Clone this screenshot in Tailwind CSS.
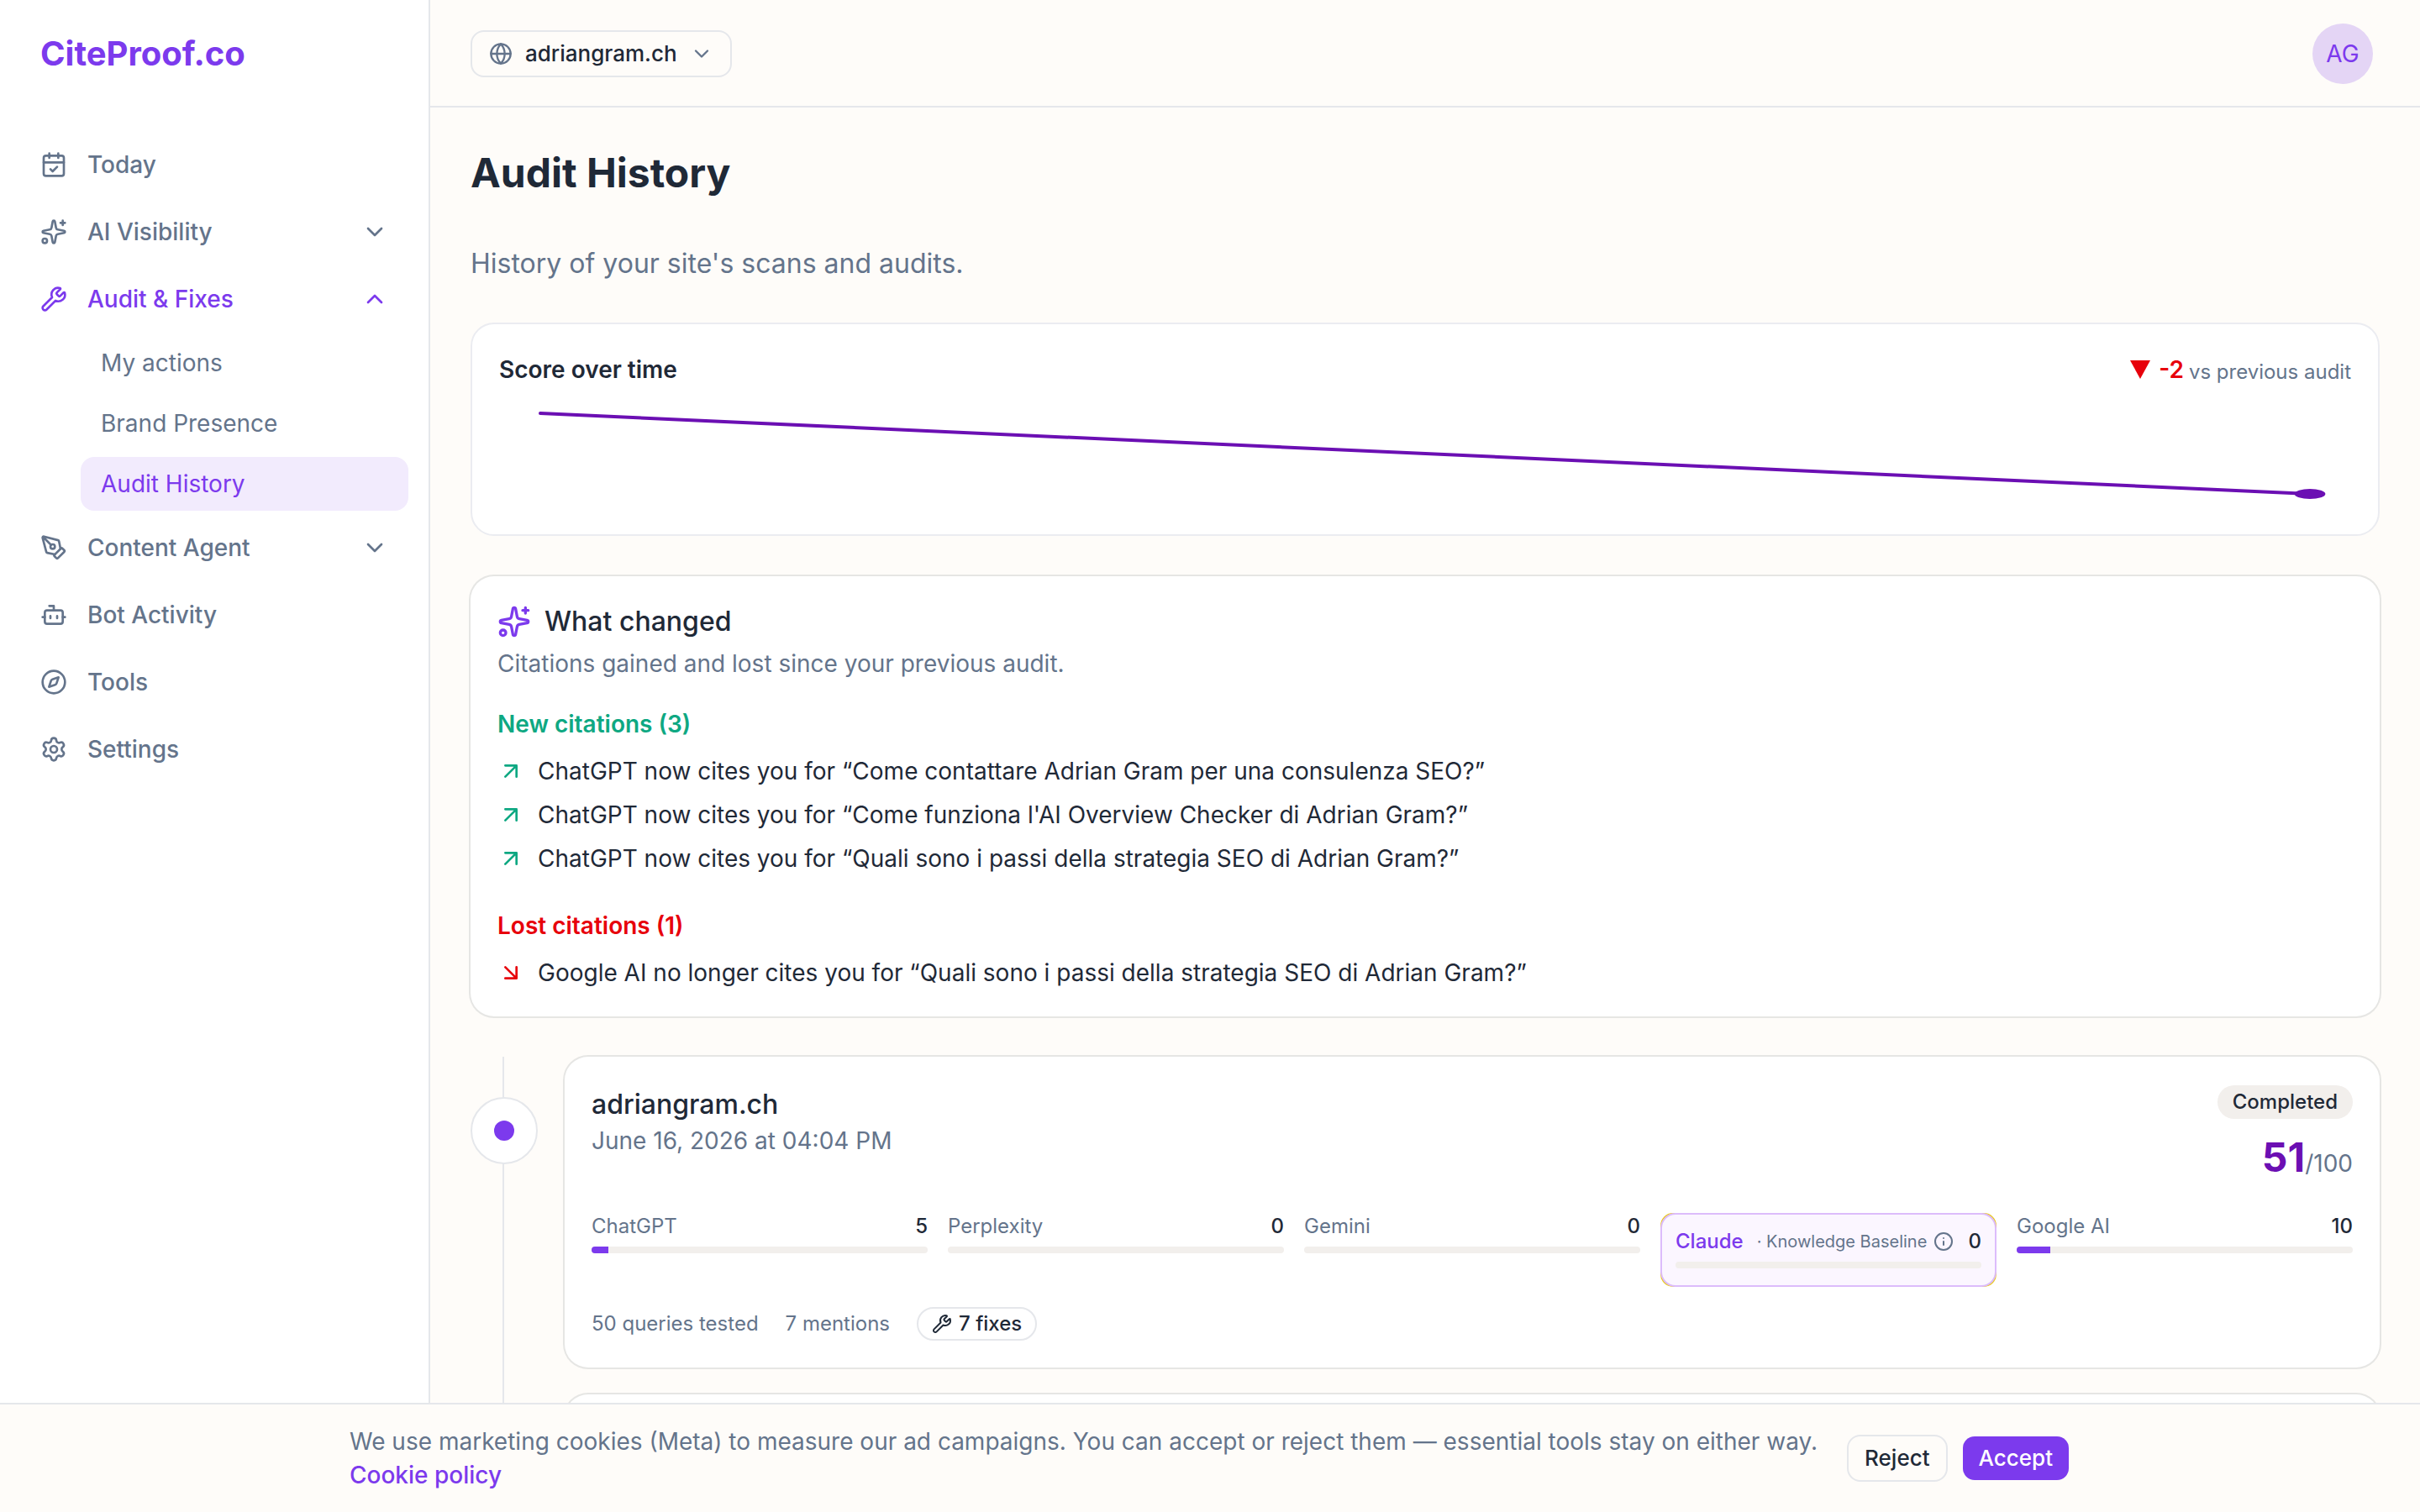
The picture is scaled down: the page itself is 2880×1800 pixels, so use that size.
<!DOCTYPE html>
<html lang="en">
<head>
<meta charset="utf-8">
<meta name="viewport" content="width=device-width, initial-scale=1">
<title>Audit History – CiteProof.co</title>
<script src="https://cdn.jsdelivr.net/npm/@tailwindcss/browser@4"></script>
</head>
<body class="h-screen overflow-hidden bg-[#fefcf9] font-[Inter,sans-serif] text-[28px] leading-[40px] text-[#1f2937]">

<svg class="hidden" aria-hidden="true">
  <symbol id="calendar" viewBox="0 0 24 24"><path d="M8 2v4M16 2v4M3 10h18M9 16l2 2 4-4"/><rect x="3" y="4" width="18" height="18" rx="2"/></symbol>
  <symbol id="sparkles" viewBox="0 0 24 24"><path d="M11.017 2.814a1 1 0 0 1 1.966 0l1.051 5.558a2 2 0 0 0 1.594 1.594l5.558 1.051a1 1 0 0 1 0 1.966l-5.558 1.051a2 2 0 0 0-1.594 1.594l-1.051 5.558a1 1 0 0 1-1.966 0l-1.051-5.558a2 2 0 0 0-1.594-1.594l-5.558-1.051a1 1 0 0 1 0-1.966l5.558-1.051a2 2 0 0 0 1.594-1.594zM20 2v4M22 4h-4"/><circle cx="4" cy="20" r="2"/></symbol>
  <symbol id="wrench" viewBox="0 0 24 24"><path d="M14.7 6.3a1 1 0 0 0 0 1.4l1.6 1.6a1 1 0 0 0 1.4 0l3.106-3.105c.32-.322.863-.22.983.218a6 6 0 0 1-8.259 7.057l-7.91 7.91a1 1 0 0 1-2.999-3l7.91-7.91a6 6 0 0 1 7.057-8.259c.438.12.54.662.219.984z"/></symbol>
  <symbol id="pen" viewBox="0 0 24 24"><path d="M15.707 21.293a1 1 0 0 1-1.414 0l-1.586-1.586a1 1 0 0 1 0-1.414l5.586-5.586a1 1 0 0 1 1.414 0l1.586 1.586a1 1 0 0 1 0 1.414z"/><path d="m18 13-1.375-6.874a1 1 0 0 0-.746-.776L3.235 2.028a1 1 0 0 0-1.207 1.207L5.35 15.879a1 1 0 0 0 .776.746L13 18M2.3 2.3l7.286 7.286"/><circle cx="11" cy="11" r="2"/></symbol>
  <symbol id="bot" viewBox="0 0 24 24"><path d="M12 8V4H8M2 14h2M20 14h2M15 13v2M9 13v2"/><rect x="4" y="8" width="16" height="12" rx="2"/></symbol>
  <symbol id="compass" viewBox="0 0 24 24"><circle cx="12" cy="12" r="10"/><path d="m16.24 7.76-1.804 5.411a2 2 0 0 1-1.265 1.265L7.76 16.24l1.804-5.411a2 2 0 0 1 1.265-1.265z"/></symbol>
  <symbol id="gear" viewBox="0 0 24 24"><path d="M9.671 4.136a2.34 2.34 0 0 1 4.659 0 2.34 2.34 0 0 0 3.319 1.915 2.34 2.34 0 0 1 2.33 4.033 2.34 2.34 0 0 0 0 3.831 2.34 2.34 0 0 1-2.33 4.033 2.34 2.34 0 0 0-3.319 1.915 2.34 2.34 0 0 1-4.659 0 2.34 2.34 0 0 0-3.32-1.915 2.34 2.34 0 0 1-2.33-4.033 2.34 2.34 0 0 0 0-3.831A2.34 2.34 0 0 1 6.35 6.051a2.34 2.34 0 0 0 3.319-1.915"/><circle cx="12" cy="12" r="3"/></symbol>
  <symbol id="globe" viewBox="0 0 24 24"><circle cx="12" cy="12" r="10"/><path d="M12 2a14.5 14.5 0 0 0 0 20 14.5 14.5 0 0 0 0-20M2 12h20"/></symbol>
  <symbol id="down" viewBox="0 0 24 24"><path d="m6 9 6 6 6-6"/></symbol>
  <symbol id="up" viewBox="0 0 24 24"><path d="m18 15-6-6-6 6"/></symbol>
  <symbol id="gained" viewBox="0 0 24 24"><path d="M7 7h10v10M7 17 17 7"/></symbol>
  <symbol id="lost" viewBox="0 0 24 24"><path d="m7 7 10 10M17 7v10H7"/></symbol>
  <symbol id="info" viewBox="0 0 24 24"><circle cx="12" cy="12" r="10"/><path d="M12 16v-4M12 8h.01"/></symbol>
</svg>

<div class="flex h-full">
  <aside class="w-[512px] shrink-0 border-r-2 border-gray-200 bg-white text-[#64748b]">
    <div class="flex h-32 items-center px-12">
      <a href="#" class="text-[40px] leading-[56px] font-bold text-[#7c3aed]">CiteProof.co</a>
    </div>
    <nav class="flex flex-col gap-2 px-6 pt-8 font-medium">
      <a href="#" class="flex h-[72px] items-center gap-6 px-6"><svg class="size-8 fill-none stroke-current stroke-2 [stroke-linecap:round] [stroke-linejoin:round]"><use href="#calendar"/></svg>Today</a>
      <button type="button" class="flex h-[72px] items-center gap-6 px-6"><svg class="size-8 fill-none stroke-current stroke-2 [stroke-linecap:round] [stroke-linejoin:round]"><use href="#sparkles"/></svg>AI Visibility<svg class="ml-auto size-8 fill-none stroke-current stroke-2 [stroke-linecap:round] [stroke-linejoin:round]"><use href="#down"/></svg></button>
      <button type="button" class="flex h-[72px] items-center gap-6 px-6 text-[#7c3aed]"><svg class="size-8 fill-none stroke-current stroke-2 [stroke-linecap:round] [stroke-linejoin:round]"><use href="#wrench"/></svg>Audit &amp; Fixes<svg class="ml-auto size-8 fill-none stroke-current stroke-2 [stroke-linecap:round] [stroke-linejoin:round]"><use href="#up"/></svg></button>
      <div class="ml-[72px] flex flex-col gap-2 font-normal">
        <a href="#" class="flex h-16 items-center px-6">My actions</a>
        <a href="#" class="flex h-16 items-center px-6">Brand Presence</a>
        <a href="#" class="flex h-16 items-center rounded-2xl bg-[#f2ebfd] px-6 text-[#7c3aed]">Audit History</a>
      </div>
      <button type="button" class="flex h-[72px] items-center gap-6 px-6"><svg class="size-8 fill-none stroke-current stroke-2 [stroke-linecap:round] [stroke-linejoin:round]"><use href="#pen"/></svg>Content Agent<svg class="ml-auto size-8 fill-none stroke-current stroke-2 [stroke-linecap:round] [stroke-linejoin:round]"><use href="#down"/></svg></button>
      <a href="#" class="flex h-[72px] items-center gap-6 px-6"><svg class="size-8 fill-none stroke-current stroke-2 [stroke-linecap:round] [stroke-linejoin:round]"><use href="#bot"/></svg>Bot Activity</a>
      <a href="#" class="flex h-[72px] items-center gap-6 px-6"><svg class="size-8 fill-none stroke-current stroke-2 [stroke-linecap:round] [stroke-linejoin:round]"><use href="#compass"/></svg>Tools</a>
      <a href="#" class="flex h-[72px] items-center gap-6 px-6"><svg class="size-8 fill-none stroke-current stroke-2 [stroke-linecap:round] [stroke-linejoin:round]"><use href="#gear"/></svg>Settings</a>
    </nav>
  </aside>

  <div class="min-w-0 grow">
    <header class="flex h-32 items-center justify-between border-b-2 border-gray-200 pt-0.5 pr-14 pl-12">
      <button type="button" class="flex h-14 items-center gap-[15px] rounded-2xl border-2 border-gray-200 px-5 text-[26px] leading-9 font-medium">
        <svg class="size-7 fill-none stroke-[#64748b] stroke-2 [stroke-linecap:round] [stroke-linejoin:round]"><use href="#globe"/></svg>adriangram.ch<svg class="size-7 fill-none stroke-[#64748b] stroke-2 [stroke-linecap:round] [stroke-linejoin:round]"><use href="#down"/></svg>
      </button>
      <button type="button" class="grid size-[72px] place-items-center rounded-full bg-[#e4d5f5] text-[#7c3aed]">AG</button>
    </header>

    <main class="px-12 pt-[46px]">
      <h1 class="text-[48px] leading-[64px] font-bold">Audit History</h1>
      <p class="mt-[52px] text-[32px] leading-[48px] text-[#64748b]">History of your site's scans and audits.</p>

      <section class="mt-[46px] rounded-[28px] border-2 border-[#ebecf1] bg-white p-8">
        <div class="flex h-11 items-center justify-between">
          <h2 class="font-semibold">Score over time</h2>
          <p class="flex items-baseline gap-1.5 text-[24px] leading-8 text-[#64748b]">
            <span class="flex items-center gap-2.5 text-[28px] leading-[40px] font-semibold text-[#e7000b]"><svg class="h-[22px] w-6 fill-current" viewBox="0 0 24 22"><path d="M0 0h24L12 22z"/></svg>-2</span>vs previous audit
          </p>
        </div>
        <svg class="mt-3.5 block h-32 w-full fill-none stroke-[#6b0fb3] stroke-[4px] [stroke-linecap:round]" viewBox="0 0 360 64" preserveAspectRatio="none">
          <path d="M8 8 352 56" vector-effect="non-scaling-stroke"/>
          <circle class="fill-[#6b0fb3] stroke-none" cx="352" cy="56" r="3"/>
        </svg>
      </section>

      <section class="mt-12 rounded-[28px] bg-white p-8 ring-2 ring-[#e6e6e4]">
        <h2 class="flex items-center gap-4 text-[32px] leading-[44px] font-medium"><svg class="size-10 fill-none stroke-[#7c3aed] stroke-2 [stroke-linecap:round] [stroke-linejoin:round]"><use href="#sparkles"/></svg>What changed</h2>
        <p class="mt-2 text-[#64748b]">Citations gained and lost since your previous audit.</p>
        <h3 class="mt-8 font-semibold text-[#0ea882]">New citations (3)</h3>
        <ul class="mt-4 flex flex-col gap-3">
          <li class="flex items-center gap-4"><svg class="size-8 fill-none stroke-[#0ea882] stroke-2 [stroke-linecap:round] [stroke-linejoin:round]"><use href="#gained"/></svg>ChatGPT now cites you for “Come contattare Adrian Gram per una consulenza SEO?”</li>
          <li class="flex items-center gap-4"><svg class="size-8 fill-none stroke-[#0ea882] stroke-2 [stroke-linecap:round] [stroke-linejoin:round]"><use href="#gained"/></svg>ChatGPT now cites you for “Come funziona l'AI Overview Checker di Adrian Gram?”</li>
          <li class="flex items-center gap-4"><svg class="size-8 fill-none stroke-[#0ea882] stroke-2 [stroke-linecap:round] [stroke-linejoin:round]"><use href="#gained"/></svg>ChatGPT now cites you for “Quali sono i passi della strategia SEO di Adrian Gram?”</li>
        </ul>
        <h3 class="mt-10 font-semibold text-[#e7000b]">Lost citations (1)</h3>
        <ul class="mt-4">
          <li class="flex items-center gap-4"><svg class="size-8 fill-none stroke-[#e7000b] stroke-2 [stroke-linecap:round] [stroke-linejoin:round]"><use href="#lost"/></svg>Google AI no longer cites you for “Quali sono i passi della strategia SEO di Adrian Gram?”</li>
        </ul>
      </section>

      <section class="relative mt-12 flex flex-col gap-8">
        <!-- timeline rail behind the audit markers -->
        <div class="absolute top-0 bottom-0 left-[38px] w-0.5 bg-gray-200"></div>
        <article class="flex gap-8">
          <div class="relative mt-12 grid size-20 shrink-0 place-items-center rounded-full border-2 border-gray-200 bg-white"><span class="size-6 rounded-full bg-[#7c3aed]"></span></div>
          <div class="grow rounded-[28px] bg-white p-8 ring-2 ring-[#e6e6e4]">
            <div class="flex h-[130px] items-start justify-between">
              <div class="pt-0.5">
                <h2 class="text-[32px] leading-[46px] font-medium">adriangram.ch</h2>
                <p class="text-[#64748b]">June 16, 2026 at 04:04 PM</p>
              </div>
              <div class="flex flex-col items-end gap-3.5 pt-0.5">
                <span class="flex h-10 items-center rounded-full bg-[#f2efec] px-[18px] text-[24px] leading-8 font-medium">Completed</span>
                <p class="text-[#64748b]"><span class="text-[48px] leading-[64px] font-bold text-[#6b0fb3]">51</span>/100</p>
              </div>
            </div>
            <div class="mt-6 grid grid-cols-5 items-start gap-6 text-[24px] leading-8 text-[#64748b]">
              <div class="flex flex-col gap-2">
                <div class="flex justify-between"><span>ChatGPT</span><span class="font-medium text-[#1f2937]">5</span></div>
                <div class="h-2 overflow-hidden rounded-full bg-[#f2efec]"><div class="h-full bg-[#7c3aed]" style="width:5%"></div></div>
              </div>
              <div class="flex flex-col gap-2">
                <div class="flex justify-between"><span>Perplexity</span><span class="font-medium text-[#1f2937]">0</span></div>
                <div class="h-2 rounded-full bg-[#f2efec]"></div>
              </div>
              <div class="flex flex-col gap-2">
                <div class="flex justify-between"><span>Gemini</span><span class="font-medium text-[#1f2937]">0</span></div>
                <div class="h-2 rounded-full bg-[#f2efec]"></div>
              </div>
              <!-- gold backing shows only at the rounded corners -->
              <div class="rounded-[15px] bg-[#eac91a]">
                <div class="flex flex-col gap-2 rounded-[18px] border-2 border-[#dcbcfb] bg-[#fbf6ff] px-4 pt-4 pb-5">
                  <div class="flex items-center"><span class="font-medium text-[#7c3aed]">Claude</span><span class="ml-4 text-[20px] leading-7">· Knowledge Baseline</span><svg class="ml-2 size-6 fill-none stroke-[#64748b] stroke-2 [stroke-linecap:round]"><use href="#info"/></svg><span class="ml-auto font-medium text-[#1f2937]">0</span></div>
                  <div class="h-2 rounded-full bg-[#f2efec]"></div>
                </div>
              </div>
              <div class="flex flex-col gap-2">
                <div class="flex justify-between"><span>Google AI</span><span class="font-medium text-[#1f2937]">10</span></div>
                <div class="h-2 overflow-hidden rounded-full bg-[#f2efec]"><div class="h-full bg-[#7c3aed]" style="width:10%"></div></div>
              </div>
            </div>
            <div class="mt-6 flex items-center gap-8 text-[24px] leading-8 text-[#64748b]">
              <span>50 queries tested</span>
              <span>7 mentions</span>
              <span class="flex h-10 items-center gap-2 rounded-full border-2 border-gray-200 px-4 font-medium text-[#1f2937]"><svg class="size-6 fill-none stroke-current stroke-2 [stroke-linecap:round] [stroke-linejoin:round]"><use href="#wrench"/></svg>7 fixes</span>
            </div>
          </div>
        </article>
        <article class="flex gap-8">
          <div class="size-20 shrink-0"></div>
          <div class="h-[140px] grow rounded-[28px] bg-white ring-2 ring-[#e6e6e4]"></div>
        </article>
      </section>
    </main>
  </div>
</div>

<div class="fixed inset-x-0 bottom-0 border-t-2 border-gray-200 bg-[#fefcf9] py-6">
  <div class="mx-auto flex max-w-[2048px] items-center justify-between gap-6">
    <p class="text-[#64748b]">We use marketing cookies (Meta) to measure our ad campaigns. You can accept or reject them — essential tools stay on either way. <a href="#" class="font-medium text-[#7c3aed]">Cookie policy</a></p>
    <div class="flex shrink-0 gap-4 text-[26px] leading-9 font-medium">
      <button type="button" class="h-14 rounded-2xl border-2 border-gray-200 px-[19px]">Reject</button>
      <button type="button" class="h-14 rounded-2xl border-2 border-transparent bg-[#7c3aed] bg-clip-padding px-[19px] text-white">Accept</button>
    </div>
  </div>
</div>
</body>
</html>
